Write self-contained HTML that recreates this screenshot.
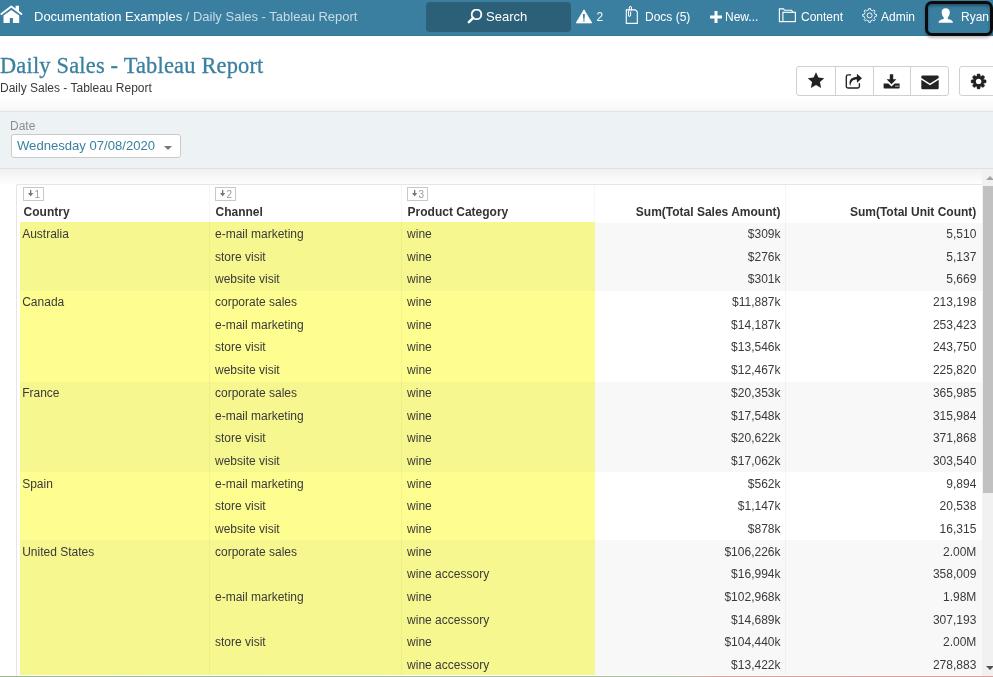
<!DOCTYPE html>
<html><head><meta charset="utf-8">
<style>
*{box-sizing:border-box;margin:0;padding:0}
html,body{width:993px;height:677px;overflow:hidden;background:#fff;will-change:transform;font-family:"Liberation Sans",sans-serif;color:#333;position:relative}
.abs{position:absolute}
#nav{position:absolute;left:0;top:0;width:993px;height:36px;background:#3a7fa0;border-bottom:1px solid #33789a}
.nt{position:absolute;top:-1.3px;height:36px;line-height:36px;font-size:13px;color:#fff;white-space:nowrap}
#search{position:absolute;left:426px;top:2px;width:145px;height:30px;background:#2c6079;border-radius:4px}
#ryan{position:absolute;left:925px;top:1px;width:68px;height:35px;border:3px solid #0a0a0a;border-radius:7px;box-shadow:0 2px 3px rgba(0,0,0,.25),inset 0 2px 3px rgba(0,0,0,.35)}
h1{position:absolute;left:0;top:50.7px;font-family:"Liberation Serif",serif;font-weight:normal;font-size:22.4px;letter-spacing:0.2px;color:#3b80a1;-webkit-text-stroke:0.3px #3b80a1;white-space:nowrap;line-height:30px}
#sub{position:absolute;left:0;top:81.4px;font-size:12px;color:#3a3a3a;line-height:14px;white-space:nowrap}
#tb{position:absolute;left:796px;top:66px;width:153px;height:30px;border:1px solid #d0d0d0;border-radius:3px;background:#fff}
#tb .d{position:absolute;top:0;width:1px;height:28px;background:#d0d0d0}
#gearbtn{position:absolute;left:959px;top:66px;width:50px;height:30px;border:1px solid #d0d0d0;border-radius:3px;background:#fff}
#topgrad{position:absolute;left:0;top:98px;width:993px;height:13px;background:linear-gradient(#fff,#f6f6f6)}
#panel{position:absolute;left:0;top:111px;width:993px;height:58px;background:#edf2f5;border-top:1px solid #dfe3e6;border-bottom:1px solid #dce0e2}
#datelbl{position:absolute;left:10px;top:118.5px;font-size:12px;color:#8c8c8c;line-height:14px}
#sel{position:absolute;left:11px;top:134px;width:170px;height:24px;background:#fff;border:1px solid #c9c9c9;border-radius:3px}
#seltxt{position:absolute;left:17px;top:137.7px;font-size:13.1px;color:#3a80a0;line-height:16px;white-space:nowrap}
#caret{position:absolute;left:163.5px;top:145.5px;width:0;height:0;border-left:4px solid transparent;border-right:4px solid transparent;border-top:4px solid #777}
#botgrad{position:absolute;left:0;top:169px;width:982px;height:15px;background:linear-gradient(#f1f1f1,#fdfdfd)}
#grid{position:absolute;left:16px;top:184px;width:967px;height:493px;border-top:1px solid #e6e6e6;border-left:1px solid #e6e6e6;border-radius:2px 0 0 0;background:#fff}
.hd{position:absolute;font-size:12px;font-weight:bold;color:#333;line-height:14px;white-space:nowrap}
.badge{position:absolute;width:21px;height:14px;border:1px solid #c8c8c8;background:#fff}
.badge span{position:absolute;left:10.5px;top:0.6px;font-size:10px;line-height:12px;color:#999}
.t{position:absolute;font-size:12px;color:#3a3a3a;line-height:14px;white-space:nowrap}
#sb{position:absolute;left:982px;top:169px;width:11px;height:508px;background:#f1f1f1}
#thumb{position:absolute;left:983px;top:186px;width:10px;height:307px;background:#c1c1c1}
#bline{position:absolute;left:0;top:676px;width:993px;height:1px;background:linear-gradient(90deg,#9fb894 0%,#adc2a2 68%,#d8a59e 72%,#d9a19a 100%)}
</style></head><body>
<div id="nav">
  <svg class="abs" style="left:0;top:0" width="26" height="26" viewBox="0 0 26 26"><polyline points="1.4,14.1 11.3,6.4 21.4,14.1" fill="none" stroke="#fff" stroke-width="1.9" stroke-linecap="round" stroke-linejoin="round"/><path d="M15.6 5.8 H19 V11.6 L15.6 9.2 Z" fill="#fff"/><path d="M3.5 15.6 L11.3 9.9 L19.2 15.6 V22.9 H12.9 V18 H9.8 V22.9 H3.5 Z" fill="#fff"/></svg>
  <div class="nt" style="left:34px">Documentation Examples <span style="color:#c8dde7">/ Daily Sales - Tableau Report</span></div>
  <div id="search"></div>
  <svg class="abs" style="left:466px;top:9px" width="17" height="16" viewBox="0 0 17 16"><circle cx="10.5" cy="5.4" r="4.8" fill="none" stroke="#fff" stroke-width="1.8"/><path d="M7.2 8.9 L2.9 13.1" stroke="#fff" stroke-width="2.6" stroke-linecap="round"/></svg>
  <div class="nt" style="left:486px">Search</div>
  <svg class="abs" style="left:574.9px;top:8.6px" width="18" height="15" viewBox="0 0 18 15"><path d="M9 0.8 L16.8 13.9 H1.2 Z" fill="#fff" stroke="#fff" stroke-width="0.8" stroke-linejoin="round"/><path d="M7.9 5 H9.9 L9.5 10.6 H8.3 Z M8.2 11.3 H9.6 V12.4 H8.2 Z" fill="#3a7fa0"/></svg>
  <div class="nt" style="left:596.4px;font-size:12px">2</div>
  <svg class="abs" style="left:620px;top:0" width="24" height="28" viewBox="620 0 24 28"><path d="M626.3 9.9 H635.4 L637.3 11.8 V23.4 H626.3 Z" fill="none" stroke="#fff" stroke-width="1.1"/><path d="M628.5 10.8 V15.2 A1.05 1.05 0 0 0 630.6 15.2 V11.6" fill="none" stroke="#fff" stroke-width="1.05"/><path d="M629.3 10.4 V7.6 A1.1 1.1 0 0 1 631.5 7.6 V10.4" fill="none" stroke="#fff" stroke-width="1.05"/></svg>
  <div class="nt" style="left:645px;font-size:12px">Docs (5)</div>
  <svg class="abs" style="left:710px;top:11px" width="12" height="12" viewBox="0 0 12 12"><path d="M4.5 0 H7.5 V4.5 H12 V7.5 H7.5 V12 H4.5 V7.5 H0 V4.5 H4.5 Z" fill="#fff"/></svg>
  <div class="nt" style="left:725px;font-size:12px">New...</div>
  <svg class="abs" style="left:774px;top:0" width="26" height="28" viewBox="774 0 26 28"><path d="M782.8 21.6 H779.4 V8.9 H783.3 L784.6 10.2 H791.6 L792.6 12.1" fill="none" stroke="#fff" stroke-width="1.15"/><rect x="782.9" y="12.3" width="12.5" height="9.3" fill="none" stroke="#fff" stroke-width="1.15"/></svg>
  <div class="nt" style="left:801px;font-size:12px">Content</div>
  <svg class="abs" style="left:858px;top:0" width="24" height="28" viewBox="858 0 24 28"><path d="M868.54 10.00 L868.77 8.45 L870.43 8.45 L870.66 10.00 L872.66 10.83 L873.93 9.90 L875.10 11.07 L874.17 12.34 L875.00 14.34 L876.55 14.57 L876.55 16.23 L875.00 16.46 L874.17 18.46 L875.10 19.73 L873.93 20.90 L872.66 19.97 L870.66 20.80 L870.43 22.35 L868.77 22.35 L868.54 20.80 L866.54 19.97 L865.27 20.90 L864.10 19.73 L865.03 18.46 L864.20 16.46 L862.65 16.23 L862.65 14.57 L864.20 14.34 L865.03 12.34 L864.10 11.07 L865.27 9.90 L866.54 10.83 Z" fill="none" stroke="#fff" stroke-width="0.9" stroke-linejoin="round"/><circle cx="869.6" cy="15.4" r="2.5" fill="none" stroke="#fff" stroke-width="0.95"/></svg>
  <div class="nt" style="left:881px;font-size:12px">Admin</div>
  <div id="ryan"></div>
  <svg class="abs" style="left:934px;top:0" width="24" height="28" viewBox="934 0 24 28"><path d="M945.6 8.3 C942.9 8.3 941.6 10.2 941.7 12.6 C941.8 14.9 942.7 16.6 943.7 17.6 V18.9 C940.6 19.5 938.6 20.4 938.5 22.7 H953 C952.9 20.4 950.9 19.5 947.8 18.9 V17.6 C948.8 16.6 949.7 14.9 949.8 12.6 C949.9 10.2 948.4 8.3 945.6 8.3 Z" fill="#fff"/></svg>
  <div class="nt" style="left:961px;font-size:12px">Ryan</div>
</div>

<h1>Daily Sales - Tableau Report</h1>
<div id="sub">Daily Sales - Tableau Report</div>

<div id="tb">
  <div class="d" style="left:38px"></div><div class="d" style="left:76px"></div><div class="d" style="left:113px"></div>
  <svg class="abs" style="left:10px;top:5.4px" width="18" height="17" viewBox="0 0 17 16"><path d="M8.5 0.3 L10.8 5.2 L16.3 5.8 L12.2 9.5 L13.4 15 L8.5 12.2 L3.6 15 L4.8 9.5 L0.7 5.8 L6.2 5.2 Z" fill="#222"/></svg>
  <svg class="abs" style="left:40px;top:0" width="28" height="28" viewBox="837 67 28 28"><path d="M851.1 74.9 H848.1 A1.8 1.8 0 0 0 846.3 76.7 V86.2 A1.8 1.8 0 0 0 848.1 88 H857.6 A1.8 1.8 0 0 0 859.4 86.2 V83.2" fill="none" stroke="#222" stroke-width="1.35"/><path d="M850.3 86 C848.6 82.5 849.2 77.2 856.9 76.7 V73.8 L862 78.3 L856.9 82.7 V79.6 C852.8 79.5 851 81.5 850.3 86 Z" fill="#222"/></svg>
  <svg class="abs" style="left:86px;top:7px" width="18" height="15" viewBox="0 0 18 15"><path d="M6.8 0.3 H10.2 V5.2 H13.4 L8.5 10.2 L3.6 5.2 H6.8 Z" fill="#222"/><path d="M0.6 9.4 H5.3 L8.5 12.5 L11.7 9.4 H16.6 V13.8 A0.8 0.8 0 0 1 15.8 14.6 H1.4 A0.8 0.8 0 0 1 0.6 13.8 Z" fill="#222"/><rect x="12.4" y="11.6" width="1.2" height="1.1" fill="#fff"/><rect x="14.3" y="11.6" width="1.2" height="1.1" fill="#fff"/></svg>
  <svg class="abs" style="left:124px;top:8px" width="18" height="15" viewBox="0 0 18 15"><path d="M1.5 0.5 H16.5 A1.2 1.2 0 0 1 17.7 1.7 V3 L9 8.5 L0.3 3 V1.7 A1.2 1.2 0 0 1 1.5 0.5 Z" fill="#222"/><path d="M0.3 4.8 L9 10.3 L17.7 4.8 V13 A1.3 1.3 0 0 1 16.4 14.3 H1.6 A1.3 1.3 0 0 1 0.3 13 Z" fill="#222"/></svg>
</div>
<div id="gearbtn">
  <svg class="abs" style="left:0;top:0" width="30" height="30" viewBox="960 67 30 30"><path d="M976.74 76.33 L977.31 73.91 L979.89 73.91 L980.46 76.33 L980.87 76.50 L982.98 75.19 L984.81 77.02 L983.50 79.13 L983.67 79.54 L986.09 80.11 L986.09 82.69 L983.67 83.26 L983.50 83.67 L984.81 85.78 L982.98 87.61 L980.87 86.30 L980.46 86.47 L979.89 88.89 L977.31 88.89 L976.74 86.47 L976.33 86.30 L974.22 87.61 L972.39 85.78 L973.70 83.67 L973.53 83.26 L971.11 82.69 L971.11 80.11 L973.53 79.54 L973.70 79.13 L972.39 77.02 L974.22 75.19 L976.33 76.50 Z" fill="#222" stroke="#222" stroke-width="0.4" stroke-linejoin="round"/><circle cx="978.6" cy="81.4" r="2.7" fill="#fff"/></svg>
</div>

<div id="topgrad"></div>
<div id="panel"></div>
<div id="datelbl">Date</div>
<div id="sel"></div>
<div id="seltxt">Wednesday 07/08/2020</div>
<div id="caret"></div>
<div id="botgrad"></div>

<div id="grid"></div>
<!--ROWS-->
<div class="abs" style="left:20px;top:222.00px;width:575px;height:68.95px;background:#f7f78f"></div>
<div class="abs" style="left:595px;top:223.00px;width:387px;height:67.95px;background:#f8f8f8"></div>
<div class="abs" style="left:20px;top:290.95px;width:575px;height:90.60px;background:#fdfd90"></div>
<div class="abs" style="left:595px;top:290.95px;width:387px;height:90.60px;background:#ffffff"></div>
<div class="abs" style="left:20px;top:381.55px;width:575px;height:90.60px;background:#f7f78f"></div>
<div class="abs" style="left:595px;top:381.55px;width:387px;height:90.60px;background:#f8f8f8"></div>
<div class="abs" style="left:20px;top:472.15px;width:575px;height:67.95px;background:#fdfd90"></div>
<div class="abs" style="left:595px;top:472.15px;width:387px;height:67.95px;background:#ffffff"></div>
<div class="abs" style="left:20px;top:540.10px;width:575px;height:134.90px;background:#f7f78f"></div>
<div class="abs" style="left:595px;top:540.10px;width:387px;height:134.90px;background:#f8f8f8"></div>
<div class="t" style="left:22.2px;top:227.00px">Australia</div>
<div class="t" style="left:215.0px;top:227.00px">e-mail marketing</div>
<div class="t" style="left:407.1px;top:227.00px">wine</div>
<div class="t r" style="right:212.5px;top:227.00px">$309k</div>
<div class="t r" style="right:16.700000000000045px;top:227.00px">5,510</div>
<div class="t" style="left:215.0px;top:249.69px">store visit</div>
<div class="t" style="left:407.1px;top:249.69px">wine</div>
<div class="t r" style="right:212.5px;top:249.69px">$276k</div>
<div class="t r" style="right:16.700000000000045px;top:249.69px">5,137</div>
<div class="t" style="left:215.0px;top:272.38px">website visit</div>
<div class="t" style="left:407.1px;top:272.38px">wine</div>
<div class="t r" style="right:212.5px;top:272.38px">$301k</div>
<div class="t r" style="right:16.700000000000045px;top:272.38px">5,669</div>
<div class="t" style="left:22.2px;top:295.07px">Canada</div>
<div class="t" style="left:215.0px;top:295.07px">corporate sales</div>
<div class="t" style="left:407.1px;top:295.07px">wine</div>
<div class="t r" style="right:212.5px;top:295.07px">$11,887k</div>
<div class="t r" style="right:16.700000000000045px;top:295.07px">213,198</div>
<div class="t" style="left:215.0px;top:317.76px">e-mail marketing</div>
<div class="t" style="left:407.1px;top:317.76px">wine</div>
<div class="t r" style="right:212.5px;top:317.76px">$14,187k</div>
<div class="t r" style="right:16.700000000000045px;top:317.76px">253,423</div>
<div class="t" style="left:215.0px;top:340.45px">store visit</div>
<div class="t" style="left:407.1px;top:340.45px">wine</div>
<div class="t r" style="right:212.5px;top:340.45px">$13,546k</div>
<div class="t r" style="right:16.700000000000045px;top:340.45px">243,750</div>
<div class="t" style="left:215.0px;top:363.14px">website visit</div>
<div class="t" style="left:407.1px;top:363.14px">wine</div>
<div class="t r" style="right:212.5px;top:363.14px">$12,467k</div>
<div class="t r" style="right:16.700000000000045px;top:363.14px">225,820</div>
<div class="t" style="left:22.2px;top:385.83px">France</div>
<div class="t" style="left:215.0px;top:385.83px">corporate sales</div>
<div class="t" style="left:407.1px;top:385.83px">wine</div>
<div class="t r" style="right:212.5px;top:385.83px">$20,353k</div>
<div class="t r" style="right:16.700000000000045px;top:385.83px">365,985</div>
<div class="t" style="left:215.0px;top:408.52px">e-mail marketing</div>
<div class="t" style="left:407.1px;top:408.52px">wine</div>
<div class="t r" style="right:212.5px;top:408.52px">$17,548k</div>
<div class="t r" style="right:16.700000000000045px;top:408.52px">315,984</div>
<div class="t" style="left:215.0px;top:431.21px">store visit</div>
<div class="t" style="left:407.1px;top:431.21px">wine</div>
<div class="t r" style="right:212.5px;top:431.21px">$20,622k</div>
<div class="t r" style="right:16.700000000000045px;top:431.21px">371,868</div>
<div class="t" style="left:215.0px;top:453.90px">website visit</div>
<div class="t" style="left:407.1px;top:453.90px">wine</div>
<div class="t r" style="right:212.5px;top:453.90px">$17,062k</div>
<div class="t r" style="right:16.700000000000045px;top:453.90px">303,540</div>
<div class="t" style="left:22.2px;top:476.59px">Spain</div>
<div class="t" style="left:215.0px;top:476.59px">e-mail marketing</div>
<div class="t" style="left:407.1px;top:476.59px">wine</div>
<div class="t r" style="right:212.5px;top:476.59px">$562k</div>
<div class="t r" style="right:16.700000000000045px;top:476.59px">9,894</div>
<div class="t" style="left:215.0px;top:499.28px">store visit</div>
<div class="t" style="left:407.1px;top:499.28px">wine</div>
<div class="t r" style="right:212.5px;top:499.28px">$1,147k</div>
<div class="t r" style="right:16.700000000000045px;top:499.28px">20,538</div>
<div class="t" style="left:215.0px;top:521.97px">website visit</div>
<div class="t" style="left:407.1px;top:521.97px">wine</div>
<div class="t r" style="right:212.5px;top:521.97px">$878k</div>
<div class="t r" style="right:16.700000000000045px;top:521.97px">16,315</div>
<div class="t" style="left:22.2px;top:544.66px">United States</div>
<div class="t" style="left:215.0px;top:544.66px">corporate sales</div>
<div class="t" style="left:407.1px;top:544.66px">wine</div>
<div class="t r" style="right:212.5px;top:544.66px">$106,226k</div>
<div class="t r" style="right:16.700000000000045px;top:544.66px">2.00M</div>
<div class="t" style="left:407.1px;top:567.35px">wine accessory</div>
<div class="t r" style="right:212.5px;top:567.35px">$16,994k</div>
<div class="t r" style="right:16.700000000000045px;top:567.35px">358,009</div>
<div class="t" style="left:215.0px;top:590.04px">e-mail marketing</div>
<div class="t" style="left:407.1px;top:590.04px">wine</div>
<div class="t r" style="right:212.5px;top:590.04px">$102,968k</div>
<div class="t r" style="right:16.700000000000045px;top:590.04px">1.98M</div>
<div class="t" style="left:407.1px;top:612.73px">wine accessory</div>
<div class="t r" style="right:212.5px;top:612.73px">$14,689k</div>
<div class="t r" style="right:16.700000000000045px;top:612.73px">307,193</div>
<div class="t" style="left:215.0px;top:635.42px">store visit</div>
<div class="t" style="left:407.1px;top:635.42px">wine</div>
<div class="t r" style="right:212.5px;top:635.42px">$104,440k</div>
<div class="t r" style="right:16.700000000000045px;top:635.42px">2.00M</div>
<div class="t" style="left:407.1px;top:658.11px">wine accessory</div>
<div class="t r" style="right:212.5px;top:658.11px">$13,422k</div>
<div class="t r" style="right:16.700000000000045px;top:658.11px">278,883</div>
<!--/ROWS-->
<div class="abs" style="left:209px;top:185px;width:1px;height:489px;background:rgba(0,0,0,.035)"></div>
<div class="abs" style="left:401px;top:185px;width:1px;height:489px;background:rgba(0,0,0,.035)"></div>
<div class="abs" style="left:594px;top:185px;width:1px;height:37px;background:rgba(0,0,0,.035)"></div>
<div class="abs" style="left:785px;top:185px;width:1px;height:489px;background:rgba(0,0,0,.035)"></div>
<div class="badge" style="left:23px;top:187px"><svg class="abs" style="left:4px;top:1.9px" width="6" height="8" viewBox="0 0 6 8"><path d="M2 0 H3.3 V3 H5.3 L2.65 6.4 L0 3 H2 Z" fill="#777"/></svg><span>1</span></div>
<div class="badge" style="left:215px;top:187px"><svg class="abs" style="left:4px;top:1.9px" width="6" height="8" viewBox="0 0 6 8"><path d="M2 0 H3.3 V3 H5.3 L2.65 6.4 L0 3 H2 Z" fill="#777"/></svg><span>2</span></div>
<div class="badge" style="left:407px;top:187px"><svg class="abs" style="left:4px;top:1.9px" width="6" height="8" viewBox="0 0 6 8"><path d="M2 0 H3.3 V3 H5.3 L2.65 6.4 L0 3 H2 Z" fill="#777"/></svg><span>3</span></div>
<div class="hd" style="left:23.6px;top:204.6px">Country</div>
<div class="hd" style="left:215.5px;top:204.6px">Channel</div>
<div class="hd" style="left:407.6px;top:204.6px">Product Category</div>
<div class="hd" style="right:212.5px;top:204.6px">Sum(Total Sales Amount)</div>
<div class="hd" style="right:16.7px;top:204.6px">Sum(Total Unit Count)</div>


<div id="sb"></div>
<div class="abs" style="left:986px;top:175.5px;width:0;height:0;border-left:4px solid transparent;border-right:4px solid transparent;border-bottom:4px solid #a3a3a3"></div>
<div id="thumb"></div>
<div class="abs" style="left:986px;top:666px;width:0;height:0;border-left:4px solid transparent;border-right:4px solid transparent;border-top:4px solid #505050"></div>
<div id="bline"></div>
</body></html>
